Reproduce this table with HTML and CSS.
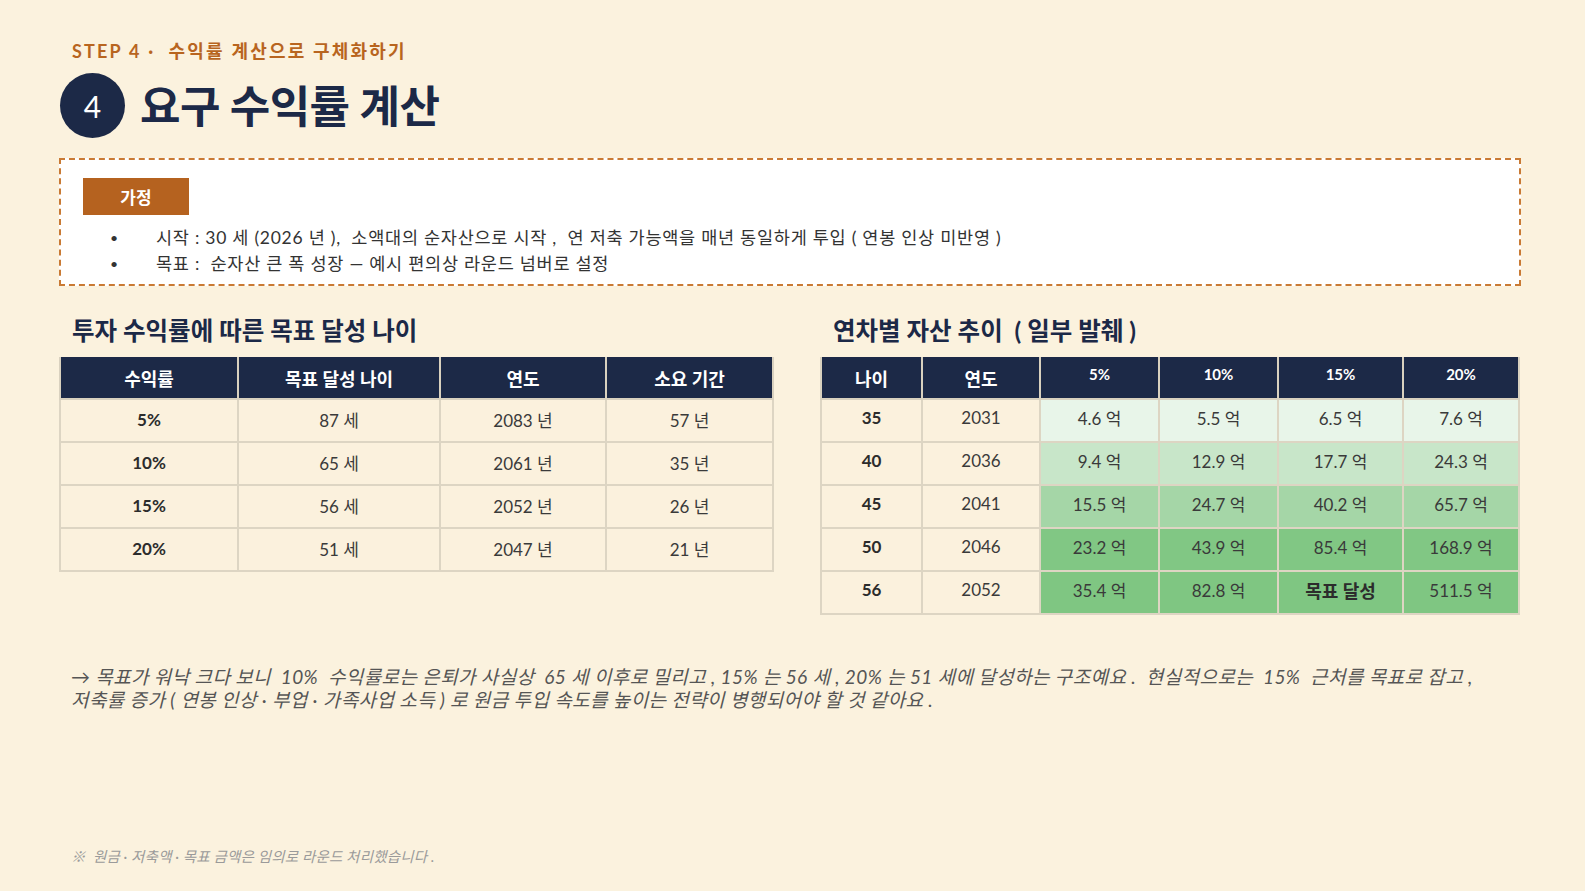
FILE: index.html
```html
<!DOCTYPE html>
<html lang="ko">
<head>
<meta charset="utf-8">
<title>요구 수익률 계산</title>
<link rel="stylesheet" href="styles.css">
</head>
<body>
<div class="page">
  <div class="step">STEP 4 ·&nbsp; 수익률 계산으로 구체화하기</div>
  <div class="title-row">
    <div class="num">4</div>
    <h1 class="title">요구 수익률 계산</h1>
  </div>

  <div class="assume">
    <div class="tag">가정</div>
    <ul class="bullets">
      <li><span class="dot">•</span><span>시작 : 30 세 (2026 년 ),&nbsp; 소액대의 순자산으로 시작 ,&nbsp; 연 저축 가능액을 매년 동일하게 투입 ( 연봉 인상 미반영 )</span></li>
      <li><span class="dot">•</span><span>목표 :&nbsp; 순자산 큰 폭 성장 — 예시 편의상 라운드 넘버로 설정</span></li>
    </ul>
  </div>

  <div class="sections">
    <section class="sec sec-left">
      <h2 class="sec-title">투자 수익률에 따른 목표 달성 나이</h2>
      <table class="tbl tbl-left">
        <colgroup><col class="c1"><col class="c2"><col class="c3"><col class="c4"></colgroup>
        <thead>
          <tr><th>수익률</th><th>목표 달성 나이</th><th>연도</th><th>소요 기간</th></tr>
        </thead>
        <tbody>
          <tr><td class="b">5%</td><td>87 세</td><td>2083 년</td><td>57 년</td></tr>
          <tr><td class="b">10%</td><td>65 세</td><td>2061 년</td><td>35 년</td></tr>
          <tr><td class="b">15%</td><td>56 세</td><td>2052 년</td><td>26 년</td></tr>
          <tr><td class="b">20%</td><td>51 세</td><td>2047 년</td><td>21 년</td></tr>
        </tbody>
      </table>
    </section>

    <section class="sec sec-right">
      <h2 class="sec-title">연차별 자산 추이 &nbsp;( 일부 발췌 )</h2>
      <table class="tbl tbl-right">
        <colgroup><col class="r1"><col class="r2"><col class="r3"><col class="r4"><col class="r5"><col class="r6"></colgroup>
        <thead>
          <tr><th>나이</th><th>연도</th><th class="pct">5%</th><th class="pct">10%</th><th class="pct">15%</th><th class="pct">20%</th></tr>
        </thead>
        <tbody>
          <tr class="g1"><td class="b">35</td><td>2031</td><td class="g">4.6 억</td><td class="g">5.5 억</td><td class="g">6.5 억</td><td class="g">7.6 억</td></tr>
          <tr class="g2"><td class="b">40</td><td>2036</td><td class="g">9.4 억</td><td class="g">12.9 억</td><td class="g">17.7 억</td><td class="g">24.3 억</td></tr>
          <tr class="g3"><td class="b">45</td><td>2041</td><td class="g">15.5 억</td><td class="g">24.7 억</td><td class="g">40.2 억</td><td class="g">65.7 억</td></tr>
          <tr class="g4"><td class="b">50</td><td>2046</td><td class="g">23.2 억</td><td class="g">43.9 억</td><td class="g">85.4 억</td><td class="g">168.9 억</td></tr>
          <tr class="g5"><td class="b">56</td><td>2052</td><td class="g">35.4 억</td><td class="g">82.8 억</td><td class="g goal">목표 달성</td><td class="g">511.5 억</td></tr>
        </tbody>
      </table>
    </section>
  </div>

  <p class="note">→ 목표가 워낙 크다 보니&nbsp; 10%&nbsp; 수익률로는 은퇴가 사실상&nbsp; 65 세 이후로 밀리고 , 15% 는 56 세 , 20% 는 51 세에 달성하는 구조예요 .&nbsp; 현실적으로는&nbsp; 15%&nbsp; 근처를 목표로 잡고 ,<br>저축률 증가 ( 연봉 인상 · 부업 · 가족사업 소득 ) 로 원금 투입 속도를 높이는 전략이 병행되어야 할 것 같아요 .</p>

  <p class="foot">※&nbsp; 원금 · 저축액 · 목표 금액은 임의로 라운드 처리했습니다 .</p>
</div>
</body>
</html>
```

FILE: styles.css
```css
* { box-sizing: border-box; }

html, body {
  margin: 0;
  padding: 0;
  background: #fbf2de;
}

body {
  font-family: Lato, "Noto Sans CJK KR", "Noto Sans", sans-serif;
  color: #333333;
}

.page {
  width: 1585px;
  height: 891px;
  padding: 39px 64px 0 59px;
  overflow: hidden;
}

.step {
  margin-left: 13px;
  font-size: 18px;
  line-height: 24px;
  font-weight: 700;
  color: #b8651f;
  letter-spacing: 2.2px;
}

.title-row {
  display: flex;
  align-items: center;
  gap: 15px;
  margin-top: 10px;
  margin-left: 1px;
}

.num {
  width: 65px;
  height: 65px;
  border-radius: 50%;
  background: #1c2947;
  color: #ffffff;
  font-size: 30px;
  font-weight: 400;
  display: flex;
  align-items: center;
  justify-content: center;
  flex-shrink: 0;
}

.title {
  margin: 0;
  font-size: 44px;
  line-height: 56px;
  font-weight: 700;
  color: #1c2947;
  letter-spacing: -0.6px;
}

.assume {
  margin-top: 20px;
  height: 128px;
  border: 2px dashed #c97a34;
  background: #ffffff;
  padding: 18px 22px 0 22px;
}

.tag {
  width: 106px;
  height: 37px;
  background: #b5621f;
  color: #ffffff;
  font-weight: 700;
  font-size: 17px;
  display: flex;
  align-items: center;
  justify-content: center;
}

.bullets {
  list-style: none;
  margin: 10px 0 0 0;
  padding: 0;
}

.bullets li {
  display: flex;
  font-size: 17.5px;
  line-height: 26px;
  letter-spacing: 0.75px;
  color: #333333;
}

.dot {
  width: 73px;
  padding-left: 27px;
  flex-shrink: 0;
  font-size: 14px;
  letter-spacing: 0;
}

.sections {
  display: flex;
  gap: 48px;
  margin-top: 29px;
}

.sec-left { width: 713px; }
.sec-right { width: 698px; }

.sec-title {
  margin: 0 0 10px 13px;
  font-size: 24.5px;
  line-height: 32px;
  font-weight: 700;
  color: #1c2947;
}

.tbl {
  border-collapse: collapse;
  table-layout: fixed;
  width: 100%;
}

.tbl th {
  background: #1c2947;
  color: #ffffff;
  font-weight: 700;
  font-size: 18px;
  height: 42px;
  padding: 0;
  border: 2px solid #d9d1bf;
  border-top: none;
}

.tbl td {
  background: #fbf1dd;
  height: 43px;
  padding: 0 0 2px 0;
  text-align: center;
  font-size: 17px;
  color: #3a3a3a;
  border: 2px solid #ddd5c3;
}

.tbl td.b { font-weight: 700; color: #2c2c2c; }

.c1 { width: 178px; }
.c2 { width: 202px; }
.c3 { width: 166px; }
.c4 { width: 167px; }

.r1 { width: 101px; }
.r2 { width: 118px; }
.r3 { width: 119px; }
.r4 { width: 119px; }
.r5 { width: 125px; }
.r6 { width: 116px; }

.tbl-right th.pct {
  font-size: 15px;
  padding-bottom: 7px;
}

.tbl-right td { padding-bottom: 6px; }

.g1 td.g { background: #e8f5e9; }
.g2 td.g { background: #c8e6c9; }
.g3 td.g { background: #a5d6a7; }
.g4 td.g { background: #81c784; }
.g5 td.g { background: #7fc682; }

.tbl td.goal { font-weight: 700; font-size: 18px; color: #2c2c2c; }

.note {
  margin: 50px 0 0 12px;
  font-size: 19px;
  line-height: 23px;
  letter-spacing: 0.42px;
  font-style: italic;
  color: #555555;
}

.foot {
  margin: 136px 0 0 12px;
  font-size: 14.5px;
  line-height: 20px;
  letter-spacing: 0.2px;
  font-style: italic;
  color: #9a9a9a;
}
```
